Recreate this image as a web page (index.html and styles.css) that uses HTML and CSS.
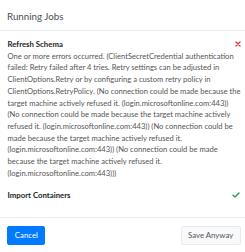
FILE: index.html
```html
<!DOCTYPE html>
<html lang="en">
<head>
<meta charset="utf-8">
<title>Running Jobs</title>
<link rel="stylesheet" href="styles.css">
</head>
<body>
<div class="modal">
  <div class="modal-header">
    <h5 class="modal-title">Running Jobs</h5>
  </div>
  <div class="modal-body">
    <div class="job">
      <div class="job-head">
        <span class="job-name">Refresh Schema</span>
        <svg class="icon-fail" width="6" height="6" viewBox="0 0 6 6" aria-hidden="true"><path d="M1 1L5 5M5 1L1 5" stroke="#dc3545" stroke-width="1.4" stroke-linecap="round"/></svg>
      </div>
      <p class="job-error">One or more errors occurred. (ClientSecretCredential authentication<br>failed: Retry failed after 4 tries. Retry settings can be adjusted in<br>ClientOptions.Retry or by configuring a custom retry policy in<br>ClientOptions.RetryPolicy. (No connection could be made because the<br>target machine actively refused it. (login.microsoftonline.com:443))<br>(No connection could be made because the target machine actively<br>refused it. (login.microsoftonline.com:443)) (No connection could be<br>made because the target machine actively refused it.<br>(login.microsoftonline.com:443)) (No connection could be made<br>because the target machine actively refused it.<br>(login.microsoftonline.com:443)))</p>
    </div>
    <div class="job job-last">
      <div class="job-head">
        <span class="job-name">Import Containers</span>
        <svg class="icon-ok" width="8" height="6" viewBox="0 0 8 6" aria-hidden="true"><path d="M1 3.2L3 5L7 1" fill="none" stroke="#28a745" stroke-width="1.5" stroke-linecap="round" stroke-linejoin="round"/></svg>
      </div>
    </div>
  </div>
  <div class="modal-footer">
    <button class="btn btn-primary" type="button">Cancel</button>
    <button class="btn btn-light" type="button">Save Anyway</button>
  </div>
</div>
</body>
</html>
```
FILE: styles.css
```css
html, body {
  margin: 0;
  padding: 0;
  background: #fff;
}
body {
  font-family: Lato, "Open Sans", "Liberation Sans", sans-serif;
  color: #212529;
}
.modal {
  width: 245px;
  background: #fff;
}
.modal-header {
  height: 31px;
  box-sizing: border-box;
  padding: 8.5px 7px 0 7px;
  border-bottom: 1px solid #e9ecef;
}
.modal-title {
  margin: 0;
  font-size: 9.75px;
  font-weight: 400;
  line-height: 14.6px;
  color: #495057;
}
.modal-body {
  padding: 8px 0 14.8px 7.5px;
}
.job-head {
  display: flex;
  align-items: center;
  justify-content: space-between;
  line-height: 11.7px;
  height: 11.7px;
  padding-right: 4.5px;
}
.job-name {
  font-size: 7.8px;
  font-weight: 700;
  color: #212529;
}
.icon-fail {
  margin-top: -2px;
}
.icon-ok {
  margin-right: 1px;
  margin-top: -3px;
}
.job-error {
  margin: 0 0 10.75px 0;
  font-size: 7.6px;
  line-height: 11.7px;
  color: #555;
  white-space: nowrap;
}
.modal-footer {
  border-top: 1px solid #e9ecef;
  padding: 8.5px 4.3px 4px 7.3px;
  display: flex;
  justify-content: space-between;
  align-items: center;
}
.btn {
  font-family: inherit;
  font-size: 7.8px;
  line-height: 11.7px;
  height: 19px;
  padding: 0 6.5px;
  border-radius: 2px;
  border: 1px solid transparent;
  cursor: pointer;
}
.btn-primary {
  background: #007bff;
  border-color: #007bff;
  color: #fff;
}
.btn-light {
  background: #f8f9fa;
  border-color: #e9ecef;
  color: #555;
}
```
